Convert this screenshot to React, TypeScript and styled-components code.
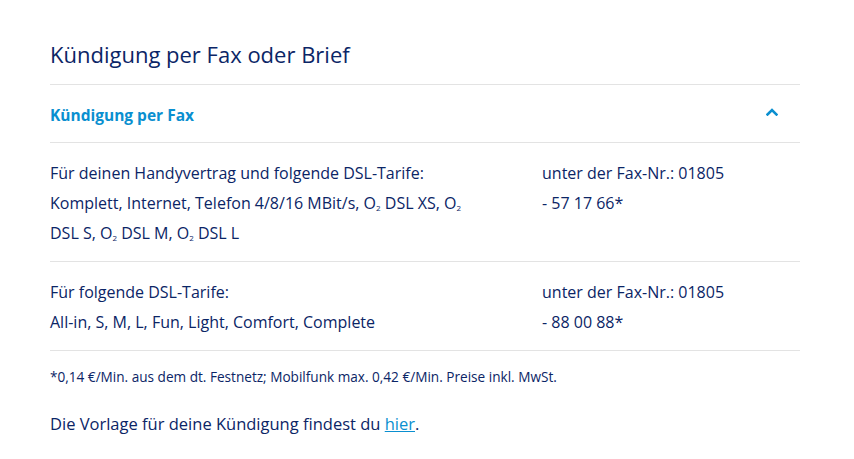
import React from "react";
import styled, { createGlobalStyle } from "styled-components";

const Global = createGlobalStyle`
  html, body { margin: 0; padding: 0; background: #ffffff; }
  body { font-family: "Open Sans", "Liberation Sans", sans-serif; color: #0b2566; }
`;

const Page = styled.main`
  width: 750px;
  padding: 36px 0 0 50px;
`;

const Title = styled.h2`
  margin: 0;
  font-size: 22px;
  font-weight: 400;
  line-height: 36px;
  color: #0b2566;
  padding-bottom: 12px;
  border-bottom: 1px solid #e3e3e3;
`;

const AccordionHeader = styled.div`
  display: flex;
  align-items: center;
  justify-content: space-between;
  height: 57px;
  border-bottom: 1px solid #e3e3e3;
`;

const AccordionTitle = styled.span`
  font-size: 15.5px;
  font-weight: 700;
  color: #0a8fd0;
  padding-top: 2px;
`;

const Chevron = styled.svg`
  width: 12px;
  height: 8px;
  margin-right: 22px;
  margin-top: -3px;
`;

const Row = styled.div`
  display: grid;
  grid-template-columns: 492px 1fr;
  padding: 15px 0 13px;
  border-bottom: 1px solid #e3e3e3;
`;

const Cell = styled.div`
  font-size: 16px;
  line-height: 30px;
  color: #0b2566;
`;

const Footnote = styled.p`
  margin: 0;
  padding-top: 15px;
  font-size: 13.6px;
  line-height: 22px;
  color: #0b2566;
`;

const Closing = styled.p`
  margin: 0;
  padding-top: 24px;
  font-size: 16.5px;
  line-height: 24px;
  color: #0b2566;
`;

const Link = styled.a`
  color: #0a8fd0;
  text-decoration: underline;
`;

const Sub = styled.sub`
  font-size: 8px;
  vertical-align: -2px;
  line-height: 0;
`;

const O2 = () => (
  <>
    O<Sub>2</Sub>
  </>
);

export default function App() {
  return (
    <>
      <Global />
      <Page>
        <Title>Kündigung per Fax oder Brief</Title>
        <AccordionHeader>
          <AccordionTitle>Kündigung per Fax</AccordionTitle>
          <Chevron viewBox="0 0 12 8" aria-hidden="true">
            <path d="M1.5 6.5 L6 2 L10.5 6.5" fill="none" stroke="#0a8fd0" strokeWidth="2.6" strokeLinecap="square" />
          </Chevron>
        </AccordionHeader>
        <Row>
          <Cell>
            Für deinen Handyvertrag und folgende DSL-Tarife:
            <br />
            Komplett, Internet, Telefon 4/8/16 MBit/s, <O2 /> DSL XS, <O2 />
            <br />
            DSL S, <O2 /> DSL M, <O2 /> DSL L
          </Cell>
          <Cell>
            unter der Fax-Nr.: 01805
            <br />- 57 17 66*
          </Cell>
        </Row>
        <Row>
          <Cell>
            Für folgende DSL-Tarife:
            <br />
            All-in, S, M, L, Fun, Light, Comfort, Complete
          </Cell>
          <Cell>
            unter der Fax-Nr.: 01805
            <br />- 88 00 88*
          </Cell>
        </Row>
        <Footnote>*0,14 €/Min. aus dem dt. Festnetz; Mobilfunk max. 0,42 €/Min. Preise inkl. MwSt.</Footnote>
        <Closing>
          Die Vorlage für deine Kündigung findest du <Link href="#">hier</Link>.
        </Closing>
      </Page>
    </>
  );
}
